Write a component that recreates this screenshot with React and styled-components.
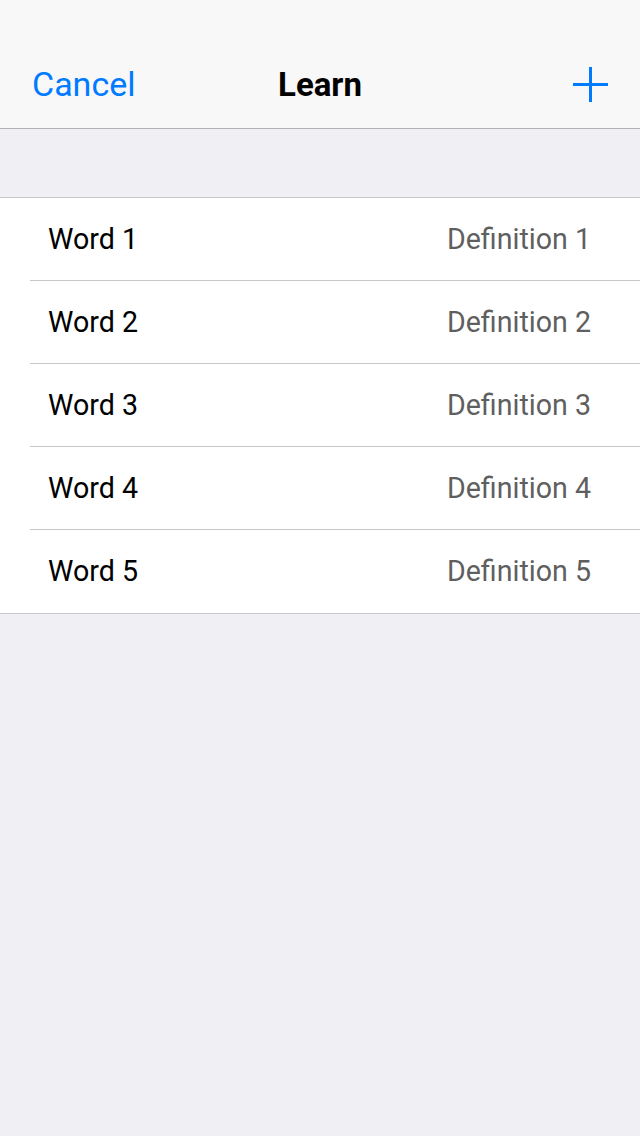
import React from "react";
import styled, { createGlobalStyle } from "styled-components";

const GlobalStyle = createGlobalStyle`
  html, body {
    margin: 0;
    padding: 0;
    background: #efeff4;
    font-family: Roboto, "Noto Sans", sans-serif;
  }
`;

const Page = styled.div`
  width: 640px;
  min-height: 1136px;
  background: #efeff4;
`;

const NavBar = styled.div`
  height: 129px;
  box-sizing: border-box;
  padding-top: 40px;
  background: #f8f8f8;
  border-bottom: 1px solid #b2b2b2;
  display: grid;
  grid-template-columns: 1fr auto 1fr;
  align-items: center;
`;

const NavButton = styled.button`
  border: none;
  background: none;
  padding: 0;
  color: #007aff;
  font-family: inherit;
  font-size: 34px;
  justify-self: ${({ $right }) => ($right ? "end" : "start")};
  margin: ${({ $right }) => ($right ? "0 32px 0 0" : "0 0 0 32px")};
  display: flex;
  align-items: center;
  cursor: pointer;
`;

const Title = styled.div`
  font-size: 33px;
  font-weight: 700;
  color: #000;
`;

const Section = styled.div`
  margin-top: 68px;
  background: #fff;
  border-top: 1px solid #c8c7cc;
  border-bottom: 1px solid #c8c7cc;
`;

const Row = styled.div`
  height: 83px;
  box-sizing: border-box;
  display: flex;
  align-items: center;
  justify-content: space-between;
  padding: 0 49px 2px 48px;
  position: relative;

  &:not(:last-child)::after {
    content: "";
    position: absolute;
    left: 30px;
    right: 0;
    bottom: 0;
    height: 1px;
    background: #c8c7cc;
  }
`;

const Word = styled.span`
  font-size: 28.6px;
  color: #000;
`;

const Definition = styled.span`
  font-size: 28.6px;
  color: #5f5f5f;
`;

const PlusIcon = () => (
  <svg width="35" height="35" viewBox="0 0 35 35">
    <path d="M17.5 0 V35 M0 17.5 H35" stroke="#007aff" strokeWidth="3" />
  </svg>
);

const rows = [1, 2, 3, 4, 5].map((n) => ({
  word: `Word ${n}`,
  definition: `Definition ${n}`,
}));

const App = () => {
  return (
    <Page>
      <GlobalStyle />
      <NavBar>
        <NavButton>Cancel</NavButton>
        <Title>Learn</Title>
        <NavButton $right>
          <PlusIcon />
        </NavButton>
      </NavBar>
      <Section>
        {rows.map((r) => (
          <Row key={r.word}>
            <Word>{r.word}</Word>
            <Definition>{r.definition}</Definition>
          </Row>
        ))}
      </Section>
    </Page>
  );
};

export default App;
